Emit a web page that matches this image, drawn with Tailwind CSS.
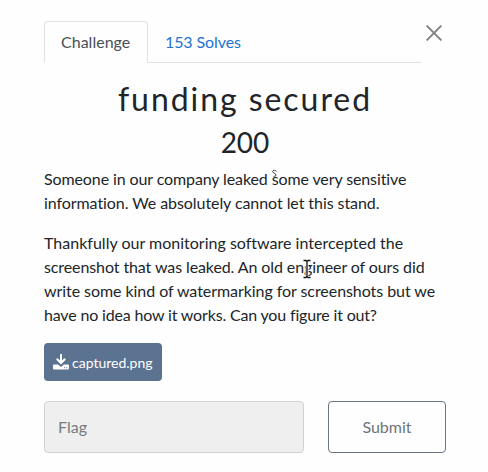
<!DOCTYPE html>
<html lang="en">
<head>
<meta charset="utf-8">
<title>funding secured</title>
<script src="https://cdn.jsdelivr.net/npm/@tailwindcss/browser@4"></script>
</head>
<body class="bg-[#fefefe] font-[Lato,sans-serif] text-base leading-6 text-[#212529] overflow-hidden">
<main class="relative w-[488px] h-[472px] pl-[44px] pr-[42px] pt-[21px]">
  <div class="flex justify-between items-start">
    <ul class="flex w-[378px] h-[42px] border-b border-[#dee2e6]">
      <li class="w-[104px] h-[42px] rounded-t border border-[#dee2e6] border-b-[#fefefe] bg-[#fefefe] px-4 py-2 text-[#495057] tracking-[0.01px]">Challenge</li>
      <li class="px-[17px] py-[9px] text-[#2272d2] tracking-[-0.1px]">153 Solves</li>
    </ul>
    <button class="mt-1 mr-[4px]" aria-label="Close">
      <svg class="block w-4 h-4" viewBox="0 0 16 16" fill="none" stroke="#7f7f7f" stroke-width="1.9"><path d="M0.6 0.6L15.4 15.4M15.4 0.6L0.6 15.4"/></svg>
    </button>
  </div>
  <h2 class="mt-[16.6px] text-center text-[32px] leading-[38.4px] tracking-[1.95px]">funding secured</h2>
  <h3 class="mt-2 text-center text-[28px] leading-[33.6px]">200</h3>
  <p class="mt-[7.4px] whitespace-nowrap"><span class="tracking-[-0.11px]">Someone in our company leaked some very sensitive</span><br><span class="tracking-[-0.07px]">information. We absolutely cannot let this stand.</span></p>
  <p class="mt-4 whitespace-nowrap"><span class="tracking-[0.01px]">Thankfully our monitoring software intercepted the</span><br><span class="tracking-[-0.1px]">screenshot that was leaked. An old engineer of ours did</span><br><span class="tracking-[-0.06px]">write some kind of watermarking for screenshots but we</span><br><span class="tracking-[-0.17px]">have no idea how it works. Can you figure it out?</span></p>
  <a class="mt-4 flex items-center w-[118px] h-[38px] rounded bg-[#5b7290] pl-[9px] text-sm text-white gap-[3px]">
    <svg class="w-4 h-4 shrink-0" viewBox="0 0 16 16" fill="#fff"><path d="M7 0H9V6.500L11.500 4L13 5.500L8 10.500L3 5.500L4.500 4L7 6.500Z"/><path fill-rule="evenodd" d="M1 10.500H5L8 13L11 10.500H15Q16 10.500 16 11.500V14.500Q16 15.500 15 15.500H1Q0 15.500 0 14.500V11.500Q0 10.500 1 10.500ZM11 13.300V14.300H12V13.300ZM13.300 13.300V14.300H14.300V13.300Z"/></svg>
    <span class="pt-[2px]">captured.png</span>
  </a>
  <div class="mt-5 flex gap-6">
    <div class="w-[260px] h-[52px] rounded border border-[#cfd3d5] bg-[#efefef] px-[13px] py-[13px] text-[#757b80]">Flag</div>
    <button class="w-[118px] h-[52px] rounded border border-[#6c757d] text-[#6c757d]">Submit</button>
  </div>
  <svg class="absolute left-[271px] top-[169px] w-[7px] h-[9px]" viewBox="0 0 7 9" fill="none" stroke="#444" stroke-width="1"><path d="M5.500 2.500C5 .8 1.500 1 1.500 2.500S5 4.300 5 6 3 7 2.500 7.500"/></svg>
  <svg class="absolute left-[301px] top-[258px] w-[12px] h-[22px]" viewBox="0 0 12 22" fill="none"><path d="M2 2.500H5L6 3.500L7 2.500H10M6 3.500V18.500M2 19.500H5L6 18.500L7 19.500H10" stroke="#fff" stroke-width="3"/><path d="M2.500 2.500H5L6 3.500L7 2.500H9.500M6 3.500V18.500M2.500 19.500H5L6 18.500L7 19.500H9.500" stroke="#111" stroke-width="1.3"/></svg>
</main>
</body>
</html>
